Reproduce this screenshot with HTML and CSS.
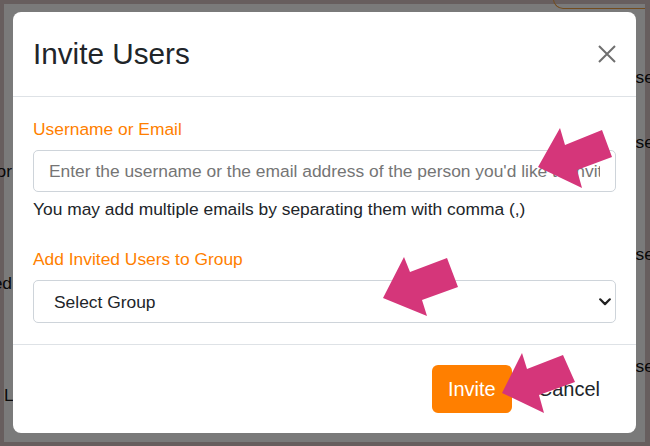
FILE: index.html
```html
<!DOCTYPE html>
<html lang="en">
<head>
    <meta charset="UTF-8">
    <meta name="viewport" content="width=device-width, initial-scale=1.0">
    <title>Invite Users</title>
    <link rel="stylesheet" href="styles.css">
</head>
<body>
    <div class="page">
        <div class="page-head">
            <div class="tab-edge"></div>
        </div>
        <div class="page-row page-row-first">
            <span class="cell-left"></span>
            <span></span>
            <span class="cell-right">Users</span>
        </div>
        <div class="page-record">
            <div class="page-row">
                <span class="cell-left"></span>
                <span></span>
                <span class="cell-right">Users</span>
            </div>
            <div class="page-row">
                <span class="cell-left">Vendor</span>
                <span></span>
                <span class="cell-right"></span>
            </div>
        </div>
        <div class="page-record">
            <div class="page-row">
                <span class="cell-left"></span>
                <span></span>
                <span class="cell-right">Users</span>
            </div>
            <div class="page-row">
                <span class="cell-left">Added</span>
                <span></span>
                <span class="cell-right"></span>
            </div>
        </div>
        <div class="page-record">
            <div class="page-row">
                <span class="cell-left"></span>
                <span></span>
                <span class="cell-right">Users</span>
            </div>
            <div class="page-row">
                <span class="cell-left cell-start">Last</span>
                <span></span>
                <span class="cell-right"></span>
            </div>
        </div>
        <div class="modal-backdrop"></div>
    </div>

    <div class="modal">
        <div class="modal-dialog">
            <div class="modal-header">
                <h5 class="modal-title">Invite Users</h5>
                <button type="button" class="btn-close" aria-label="Close">
                    <svg width="18" height="18" viewBox="0 0 18 18">
                        <path d="M1 1L17 17M17 1L1 17" stroke="#6f6f6f" stroke-width="2" fill="none"/>
                    </svg>
                </button>
            </div>
            <form id="inviteForm">
                <div class="modal-body">
                    <div class="form-group">
                        <label for="invitee" class="form-label">Username or Email</label>
                        <input type="text" id="invitee" class="form-control" placeholder="Enter the username or the email address of the person you'd like to invite">
                        <div class="form-text">You may add multiple emails by separating them with comma (,)</div>
                    </div>
                    <div class="form-group">
                        <label for="group" class="form-label">Add Invited Users to Group</label>
                        <div class="select-wrap">
                            <select id="group" class="form-select">
                                <option>Select Group</option>
                            </select>
                            <svg class="select-arrow" width="12" height="8" viewBox="0 0 12 8">
                                <path d="M1.2 1.3L6 6.1L10.8 1.3" stroke="#222" stroke-width="2.2" fill="none" stroke-linecap="round" stroke-linejoin="round"/>
                            </svg>
                        </div>
                    </div>
                </div>
                <div class="modal-footer">
                    <button type="submit" class="btn btn-primary">Invite</button>
                    <button type="button" class="btn btn-link">Cancel</button>
                </div>
            </form>
        </div>
    </div>

    <svg class="annotations" width="650" height="446" viewBox="0 0 650 446">
        <polygon points="538,167 560,128 565,145 602,130 612,157 577,170 582,188"/>
        <polygon points="383,298 404,257 410,272 447,258 458,287 422,300 427,316"/>
        <polygon points="502,393 522,353 527,369 563,355 575,382 539,395 544,413"/>
    </svg>
</body>
</html>
```

FILE: styles.css
```css
* {
    margin: 0;
    padding: 0;
    box-sizing: border-box;
}

body {
    font-family: 'Liberation Sans', Arial, Helvetica, sans-serif;
    font-size: 17.4px;
    color: #212529;
    overflow: hidden;
}

/* page behind the modal */
.page {
    position: relative;
    height: 446px;
    background-color: #fff;
    box-shadow: inset 4px 4px 0 #d7c4c4, inset -5px -4px 0 #d7c4c4;
    overflow: hidden;
    color: #111;
}

.page-head {
    height: 63px;
    display: flex;
    justify-content: flex-end;
    padding-right: 5px;
}

.tab-edge {
    width: 92px;
    height: 10px;
    border-left: 1px solid #f0a040;
    border-bottom: 1px solid #f0a040;
    border-bottom-left-radius: 16px;
    margin-top: -1px;
}

.page-row {
    display: grid;
    grid-template-columns: 12px 1fr 27px;
    line-height: 29px;
    white-space: nowrap;
}

.page-row-first {
    margin-bottom: 36px;
}

.page-record {
    margin-bottom: 54px;
}

.cell-left {
    display: flex;
    justify-content: flex-end;
}

.cell-left.cell-start {
    justify-content: flex-start;
    padding-left: 4px;
}

.modal-backdrop {
    position: absolute;
    top: 0;
    left: 0;
    width: 100%;
    height: 100%;
    background-color: rgba(0, 0, 0, 0.52);
}

/* modal */
.modal {
    position: fixed;
    top: 0;
    left: 0;
    width: 100%;
    height: 100%;
}

.modal-dialog {
    background-color: #fff;
    border-radius: 8px;
    margin: 12px 14px 0 13px;
}

.modal-header {
    display: flex;
    justify-content: space-between;
    align-items: center;
    padding: 24px 20px;
    border-bottom: 1px solid #dee2e6;
}

.modal-title {
    font-size: 29.7px;
    font-weight: 400;
    line-height: 36px;
    color: #212529;
}

.btn-close {
    border: none;
    background: transparent;
    width: 18px;
    height: 18px;
    display: flex;
    cursor: pointer;
}

.modal-body {
    padding: 19px 20px 21px;
}

.form-group + .form-group {
    margin-top: 24px;
}

.form-label {
    display: block;
    color: #ff7f00;
    line-height: 26px;
    margin-bottom: 8px;
}

.form-control,
.form-select {
    width: 100%;
    height: 42px;
    border: 1px solid #ced4da;
    border-radius: 5px;
    font-family: inherit;
    font-size: 17.4px;
    color: #212529;
    background-color: #fff;
    outline: none;
}

.form-control {
    padding: 0 15px;
}

.form-control::placeholder {
    color: #757575;
}

.form-text {
    margin-top: 4px;
    line-height: 26px;
}

.select-wrap {
    position: relative;
}

.form-select {
    height: 43px;
    appearance: none;
    -webkit-appearance: none;
    padding: 0 40px 0 20px;
}

.select-arrow {
    position: absolute;
    right: 5px;
    top: 18px;
    pointer-events: none;
}

.modal-footer {
    display: flex;
    justify-content: flex-end;
    align-items: center;
    gap: 10px;
    padding: 20px;
    border-top: 1px solid #dee2e6;
}

.btn {
    font-family: inherit;
    font-size: 20px;
    line-height: 24px;
    padding: 12px 16px;
    border: none;
    border-radius: 6px;
    cursor: pointer;
}

.btn-primary {
    background-color: #ff7f00;
    color: #fff;
}

.btn-link {
    background: transparent;
    color: #212529;
}

/* pink callout arrows drawn over the screenshot */
.annotations {
    position: fixed;
    top: 0;
    left: 0;
    pointer-events: none;
    fill: #d5367a;
}
```
